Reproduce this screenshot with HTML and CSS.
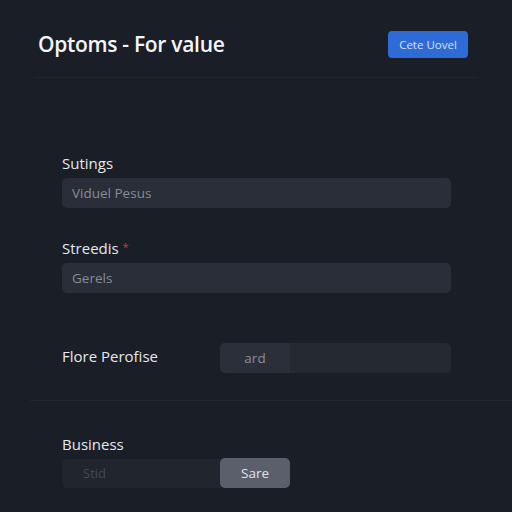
FILE: index.html
```html
<!DOCTYPE html>
<html lang="en">
<head>
    <meta charset="UTF-8">
    <meta name="viewport" content="width=device-width, initial-scale=1.0">
    <title>Optoms - For value</title>
    <link rel="stylesheet" href="styles.css">
</head>
<body>
    <div class="page">
        <div class="header">
            <h1 class="title">Optoms - For value</h1>
            <button class="btn-primary">Cete Uovel</button>
        </div>
        <div class="divider"></div>

        <div class="form">
            <div class="form-group first">
                <label class="label">Sutings</label>
                <div class="input">Viduel Pesus</div>
            </div>
            <div class="form-group second">
                <label class="label">Streedis <span class="req">*</span></label>
                <div class="input">Gerels</div>
            </div>
            <div class="form-row">
                <label class="label row-label">Flore Perofise</label>
                <div class="split-field">
                    <span class="split-seg">ard</span>
                    <span class="split-rest"></span>
                </div>
            </div>
        </div>

        <div class="divider lower"></div>

        <div class="form">
            <div class="form-group business">
                <label class="label">Business</label>
                <div class="combo">
                    <span class="combo-text">Stid</span>
                    <button class="btn-secondary">Sare</button>
                </div>
            </div>
        </div>
    </div>
</body>
</html>
```

FILE: styles.css
```css
body {
    margin: 0;
    padding: 0;
    background: #1a1e27;
    font-family: "Open Sans", "Noto Sans", sans-serif;
    color: #e6e8ec;
}

.page {
    width: 512px;
    height: 512px;
    overflow: hidden;
}

.header {
    display: flex;
    justify-content: space-between;
    align-items: center;
    padding: 31px 44px 0 38px;
}

.title {
    margin: 0;
    font-size: 21px;
    font-weight: 600;
    line-height: 27px;
    color: #f5f6f8;
    letter-spacing: -0.3px;
}

.btn-primary {
    width: 80px;
    height: 27px;
    background: #2e6bd6;
    border: none;
    border-radius: 4px;
    color: #d6e2fa;
    font-family: "Open Sans", sans-serif;
    font-size: 11.5px;
    padding: 0;
}

.divider {
    height: 1px;
    background: #22262f;
    margin: 19px 34px 0 34px;
}

.divider.lower {
    margin-top: 27px;
    margin-left: 30px;
    margin-right: 0;
}

.form {
    padding-left: 62px;
    width: 389px;
}

.form-group.first {
    margin-top: 76px;
}

.form-group.second {
    margin-top: 30px;
}

.form-group.business {
    margin-top: 34px;
}

.label {
    display: block;
    font-size: 15px;
    line-height: 18px;
    margin-bottom: 6px;
    color: #e6e8ec;
}

.req {
    color: #d6333f;
    font-size: 11px;
    vertical-align: 3px;
}

.input {
    height: 30px;
    line-height: 30px;
    background: #2a2e38;
    border-radius: 5px;
    padding-left: 10px;
    font-size: 13.5px;
    color: #878c96;
}

.form-row {
    display: flex;
    align-items: center;
    margin-top: 50px;
}

.row-label {
    width: 158px;
    margin-bottom: 0;
    padding-bottom: 4px;
}

.split-field {
    flex: 1;
    display: flex;
    height: 30px;
    border-radius: 5px;
    overflow: hidden;
    background: #252932;
}

.split-seg {
    width: 70px;
    line-height: 30px;
    text-align: center;
    background: #2b2f39;
    font-size: 13.5px;
    color: #8a8e98;
}

.split-rest {
    flex: 1;
}

.combo {
    display: flex;
    width: 228px;
    height: 29px;
    background: #21252e;
    border-radius: 5px;
}

.combo-text {
    flex: 1;
    line-height: 29px;
    padding-left: 21px;
    font-size: 13px;
    color: #454a54;
}

.btn-secondary {
    width: 70px;
    height: 30px;
    margin-top: -1px;
    border: none;
    border-radius: 5px;
    background: #5b5f6b;
    color: #e2e4e8;
    font-family: "Open Sans", sans-serif;
    font-size: 13.5px;
    padding: 0;
}
```
